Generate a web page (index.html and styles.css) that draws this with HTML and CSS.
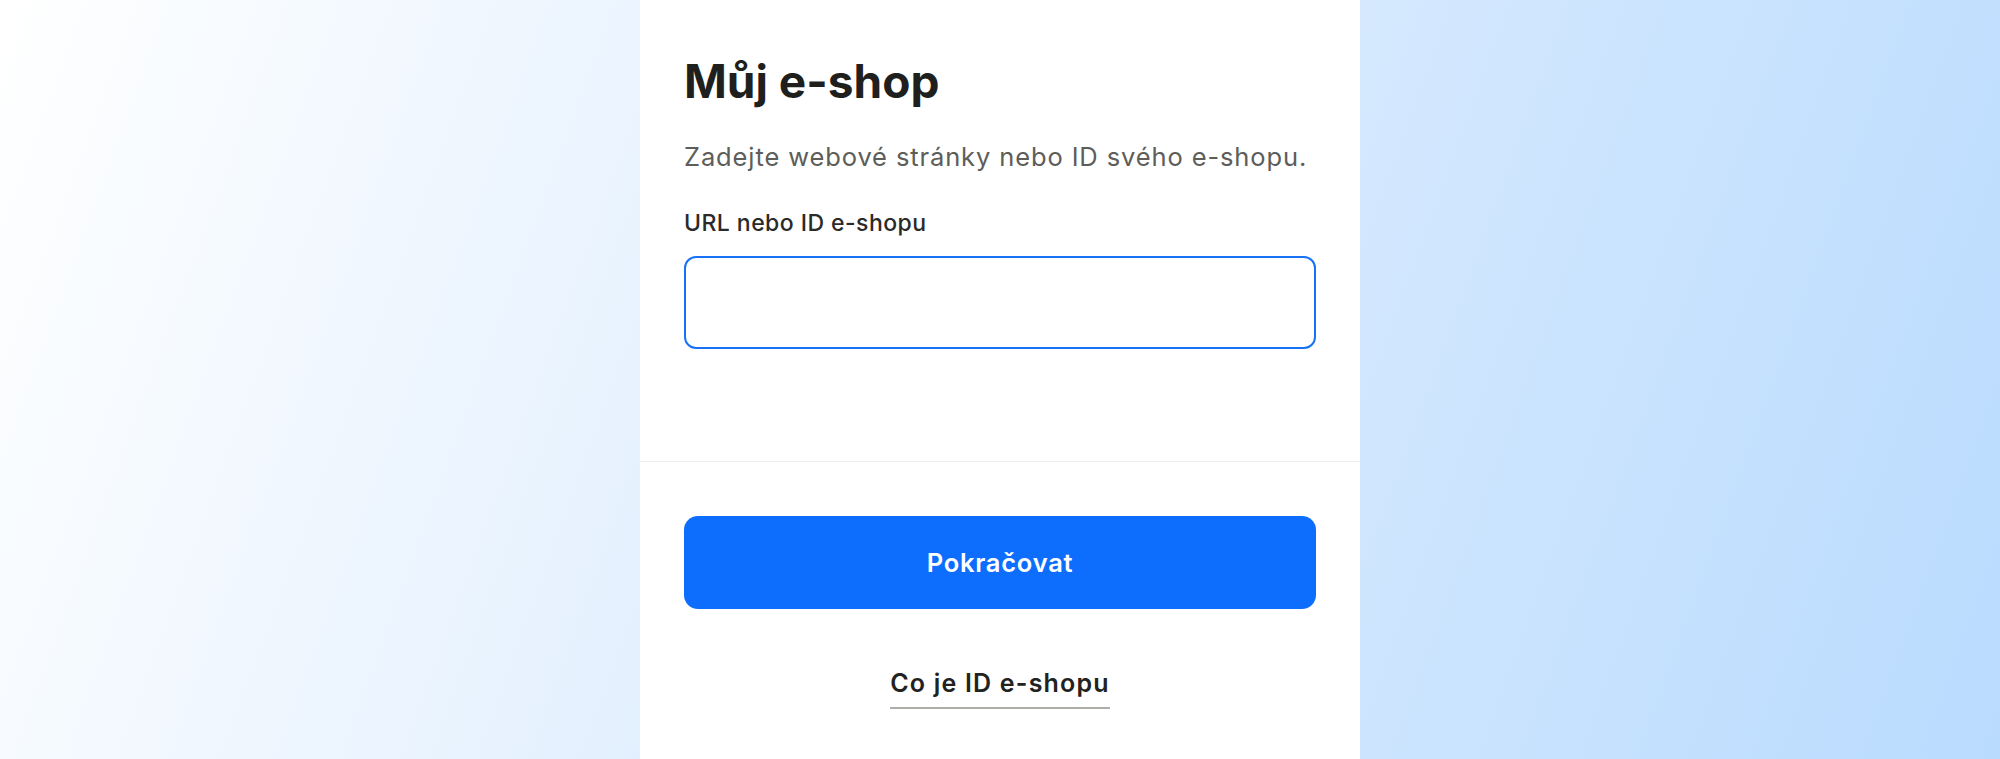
FILE: index.html
```html
<!DOCTYPE html>
<html>
<head>
  <title>Můj e-shop</title>
  <link rel="stylesheet" href="styles.css">
</head>
<body>
  <div class="card">
    <form class="card-body" id="shopForm">
      <h1>Můj e-shop</h1>
      <p class="lead">Zadejte webové stránky nebo ID svého e-shopu.</p>

      <label for="shopId">URL nebo ID e-shopu</label>
      <input type="text" id="shopId" class="field">
    </form>

    <div class="card-footer">
      <button type="submit" form="shopForm" class="btn-primary">Pokračovat</button>
      <a href="#" class="help-link">Co je ID e-shopu</a>
    </div>
  </div>
</body>
</html>
```

FILE: styles.css
```css
body {
  font-family: Inter, "Noto Sans", sans-serif;
  margin: 0;
  min-height: 100vh;
  background: linear-gradient(110deg, #ffffff 0%, #dcecfe 50%, #b9dbfe 100%);
}

.card {
  width: 720px;
  min-height: 100vh;
  margin: 0 auto;
  background-color: #fff;
  display: flex;
  flex-direction: column;
}

.card-body {
  display: flex;
  flex-direction: column;
  padding: 54px 44px 112px;
  border-bottom: 1px solid #ececec;
}

h1 {
  margin: 0;
  font-size: 46px;
  line-height: 54px;
  font-weight: 700;
  color: #1f1f1d;
}

.lead {
  margin: 31px 0 0;
  font-size: 25.5px;
  line-height: 36px;
  letter-spacing: 0.88px;
  color: #5d5d5a;
}

label {
  margin-top: 32px;
  font-size: 23px;
  line-height: 32px;
  font-weight: 500;
  letter-spacing: 0.45px;
  color: #2a2a28;
}

.field {
  margin-top: 17px;
  height: 93px;
  box-sizing: border-box;
  border: 2.5px solid #1872f6;
  border-radius: 12px;
  outline: none;
  padding: 0 20px;
  font: inherit;
  font-size: 23px;
}

.card-footer {
  display: flex;
  flex-direction: column;
  align-items: center;
  padding: 54px 44px 40px;
}

.btn-primary {
  width: 100%;
  height: 93px;
  border: none;
  border-radius: 14px;
  background-color: #0d6efd;
  color: #fff;
  font-family: inherit;
  font-size: 25.5px;
  font-weight: 600;
  letter-spacing: 0.75px;
  cursor: pointer;
}

.help-link {
  margin-top: 58px;
  padding-bottom: 8px;
  border-bottom: 2px solid #aeaea6;
  font-size: 25px;
  line-height: 32px;
  font-weight: 600;
  letter-spacing: 1.2px;
  color: #222220;
  text-decoration: none;
}
```
